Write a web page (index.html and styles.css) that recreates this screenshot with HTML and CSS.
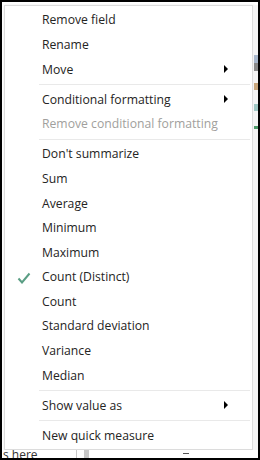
FILE: index.html
```html
<!DOCTYPE html>
<html>
<head>
<meta charset="utf-8">
<link rel="stylesheet" href="styles.css">
</head>
<body>
<div class="frame">
  <div class="top">
    <div class="menu">
      <div class="item"><span class="label">Remove field</span></div>
      <div class="item"><span class="label">Rename</span></div>
      <div class="item"><span class="label">Move</span><span class="arrow"></span></div>
      <div class="sep"></div>
      <div class="item"><span class="label">Conditional formatting</span><span class="arrow"></span></div>
      <div class="item disabled"><span class="label">Remove conditional formatting</span></div>
      <div class="sep"></div>
      <div class="item"><span class="label">Don't summarize</span></div>
      <div class="item"><span class="label">Sum</span></div>
      <div class="item"><span class="label">Average</span></div>
      <div class="item"><span class="label">Minimum</span></div>
      <div class="item"><span class="label">Maximum</span></div>
      <div class="item checked">
        <svg class="check" width="14" height="12" viewBox="0 0 14 12"><polyline points="1.5,6.5 5,10.5 12.5,1.5" fill="none" stroke="#5a9e84" stroke-width="2"/></svg>
        <span class="label">Count (Distinct)</span>
      </div>
      <div class="item"><span class="label">Count</span></div>
      <div class="item"><span class="label">Standard deviation</span></div>
      <div class="item"><span class="label">Variance</span></div>
      <div class="item"><span class="label">Median</span></div>
      <div class="sep"></div>
      <div class="item"><span class="label">Show value as</span><span class="arrow"></span></div>
      <div class="sep"></div>
      <div class="item"><span class="label">New quick measure</span></div>
    </div>
    <div class="side">
      <div class="side-bar"></div>
      <div class="side-icon brown"></div>
      <div class="side-icon teal"></div>
      <div class="side-tri"></div>
    </div>
  </div>
  <div class="bottom">
    <span class="btext">s here</span>
    <span class="vline"></span>
    <span class="gblock"></span>
    <span class="dash"></span>
  </div>
</div>
</body>
</html>
```
FILE: styles.css
```css
html, body {
  margin: 0;
  padding: 0;
  background: #fff;
}
.frame {
  width: 260px;
  height: 460px;
  box-sizing: border-box;
  border: 2px solid #000;
  display: flex;
  flex-direction: column;
  background: #fff;
  overflow: hidden;
  font-family: "Segoe UI", "Open Sans", "Liberation Sans", sans-serif;
}
.top {
  display: flex;
  height: 448px;
  flex: none;
}
.menu {
  width: 249px;
  margin: 3px 0 0 2px;
  box-sizing: border-box;
  border: 1px solid #dcdcdc;
  box-shadow: 1px 1px 3px rgba(0,0,0,0.18);
  background: #fff;
  padding: 1.7px 0 1.5px;
  display: flex;
  flex-direction: column;
}
.item {
  height: 24.6px;
  display: flex;
  align-items: center;
  padding-left: 37px;
  font-size: 12.2px;
  color: #252423;
  position: relative;
}
.item.disabled {
  color: #a19f9d;
}
.item.checked {
  padding-left: 12px;
}
.check {
  margin-right: 11px;
  margin-top: 2px;
  flex: none;
}
.arrow {
  margin-left: auto;
  margin-right: 24px;
  width: 0;
  height: 0;
  border-top: 4px solid transparent;
  border-bottom: 4px solid transparent;
  border-left: 4px solid #000;
}
.sep {
  height: 1px;
  background: #e9e9e9;
  margin: 3px 2px 1.5px 34px;
}
.side {
  flex: 1;
  display: flex;
  flex-direction: column;
  align-items: flex-end;
  background: #f4f4f4;
  margin-top: 3px;
}
.side-bar {
  width: 4px;
  height: 16px;
  margin-top: 50px;
  background: linear-gradient(#a9b8cc 0 50%, #8a8a8a 50%);
}
.side-icon {
  width: 4px;
  height: 7px;
  margin-top: 12px;
}
.side-icon.brown { background: #c9a77d; }
.side-icon.teal { background: #9fc7c4; margin-top: 14px; }
.side-tri {
  width: 4px;
  height: 3px;
  margin-top: 15px;
  background: #4e9a6a;
}
.bottom {
  flex: 1;
  display: flex;
  align-items: flex-start;
  overflow: hidden;
  background: #fff;
  position: relative;
}
.btext {
  margin-left: 1px;
  margin-top: -2px;
  font-size: 12px;
  line-height: 14px;
  color: #333;
  width: 72px;
  flex: none;
}
.vline {
  width: 1px;
  height: 10px;
  background: #c8c8c8;
  margin-left: 1px;
}
.gblock {
  width: 5px;
  height: 10px;
  margin-left: 7px;
  background: #c8c8c8;
}
.dash {
  width: 6px;
  height: 1px;
  margin-left: 94px;
  margin-top: 3px;
  background: #555;
}
```
